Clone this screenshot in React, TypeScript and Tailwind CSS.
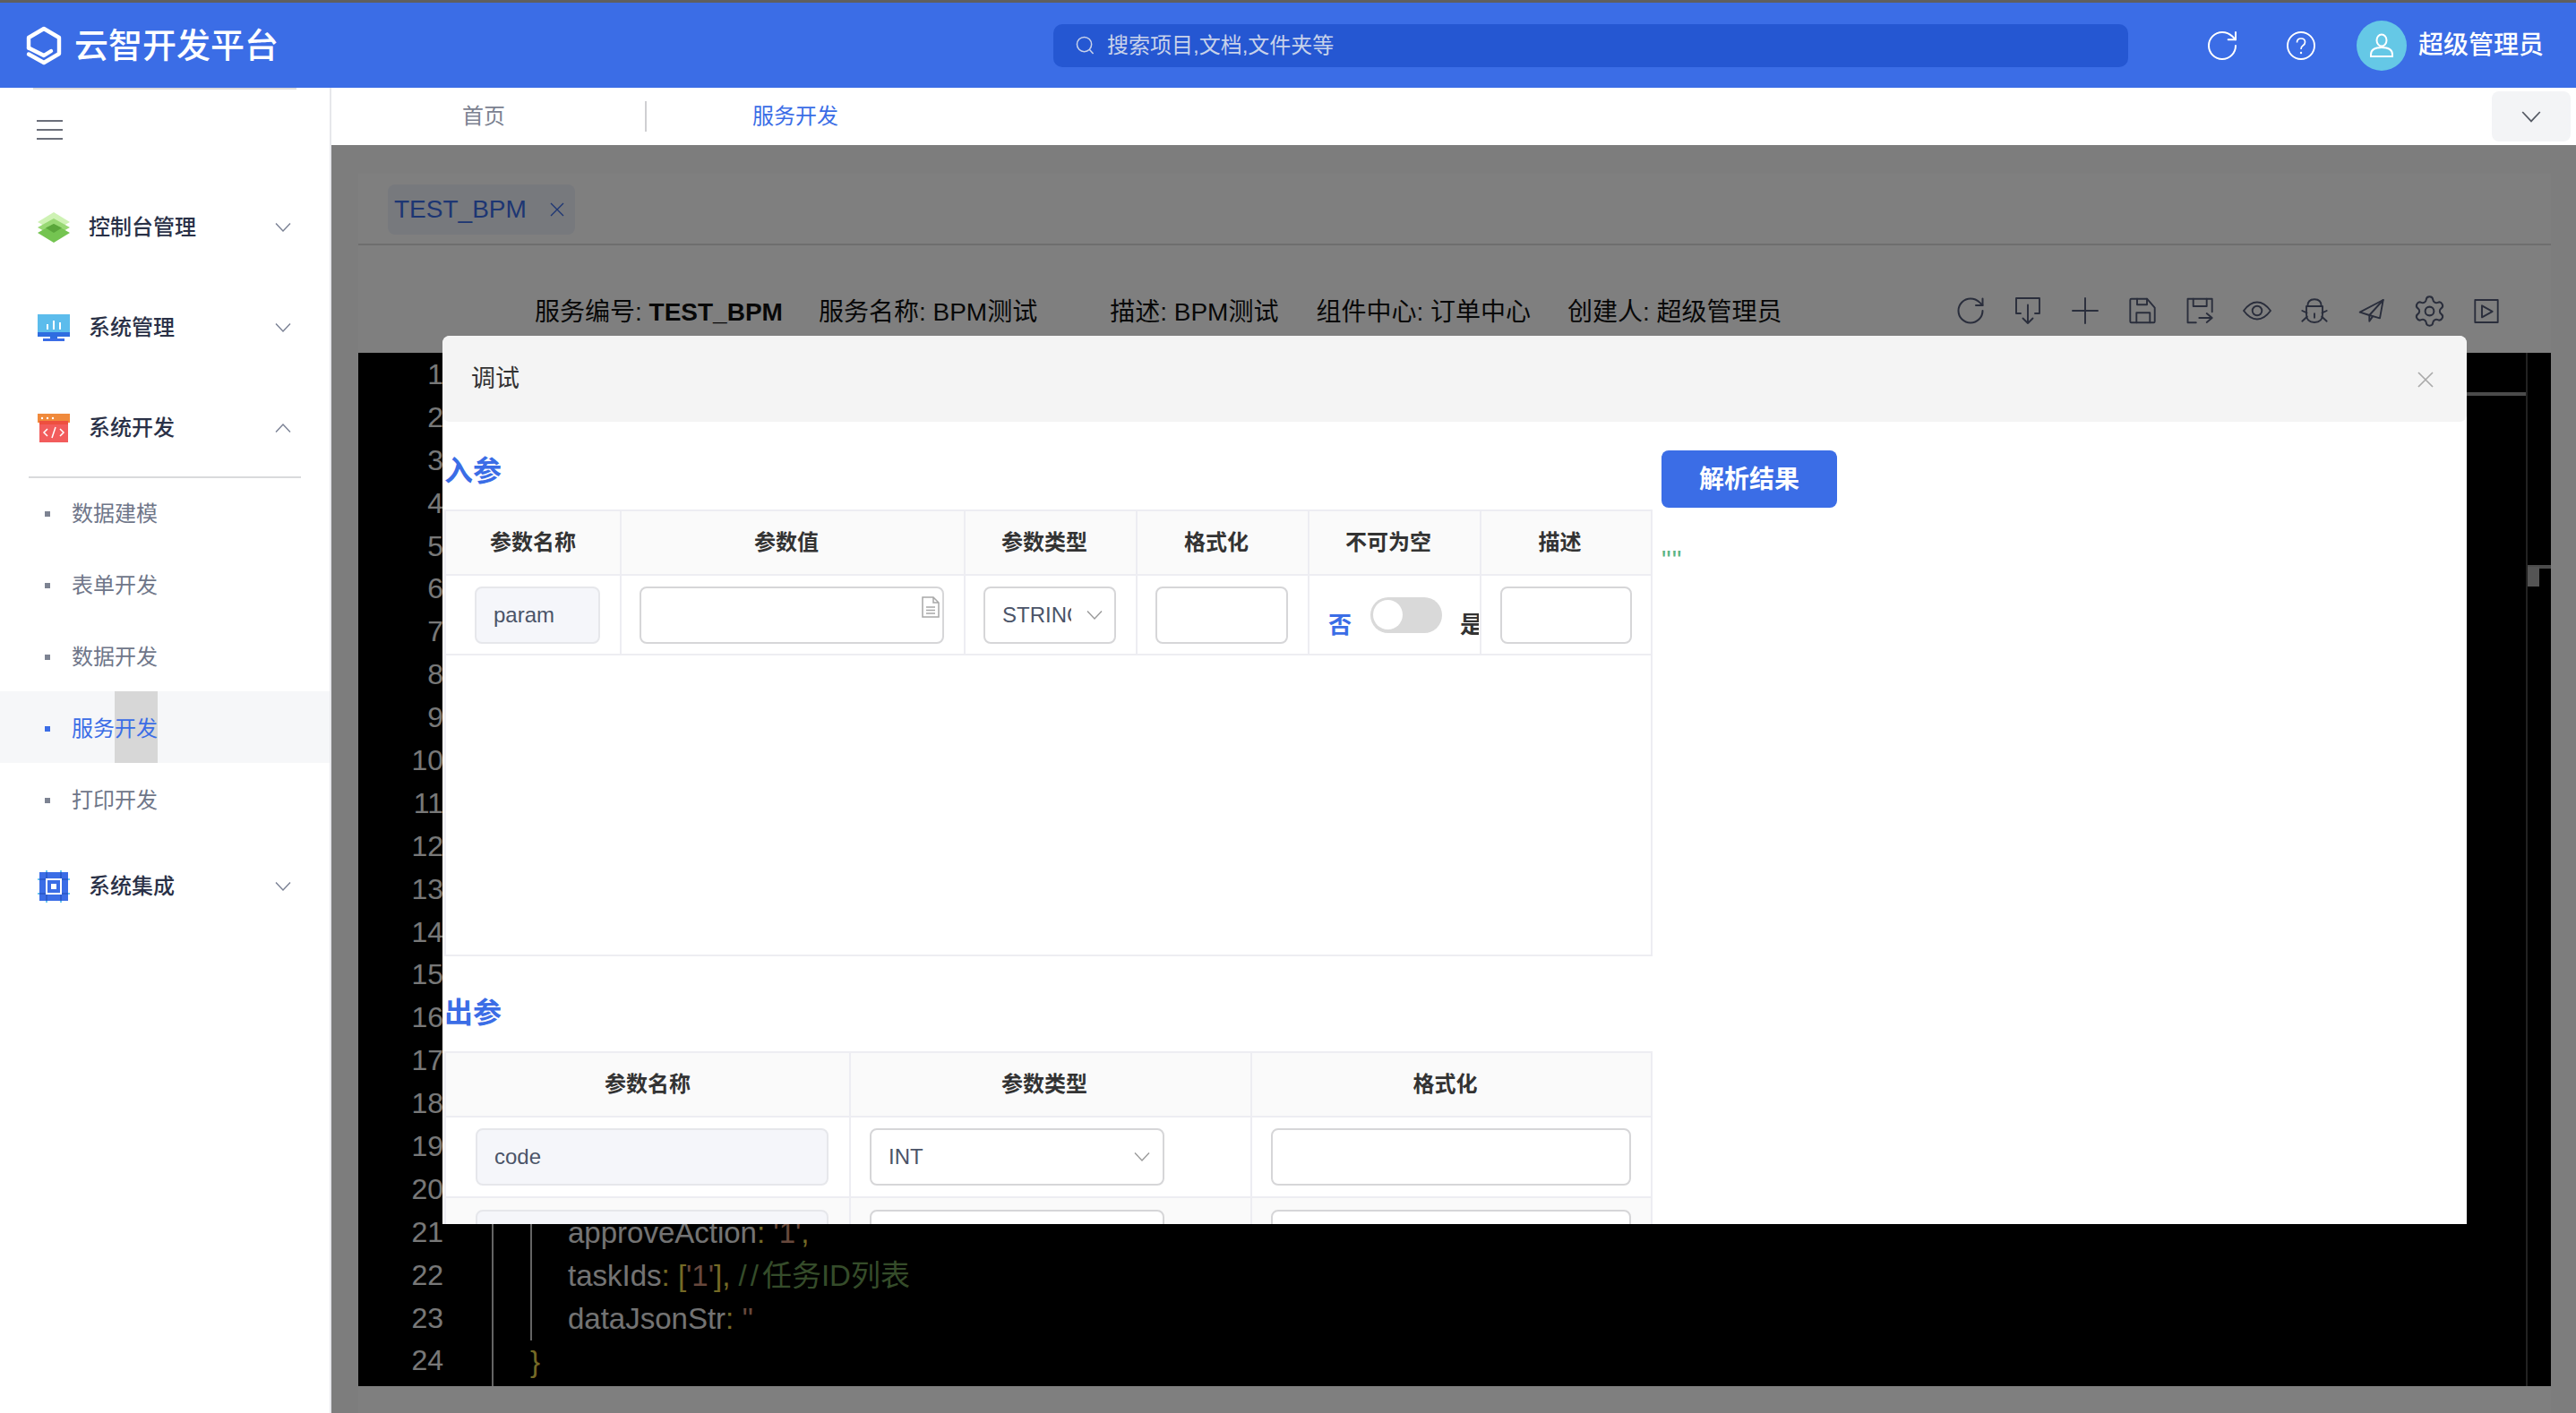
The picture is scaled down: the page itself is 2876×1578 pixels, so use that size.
import React from "react";
import { RotateCw, Settings } from "lucide-react";

const Chevron = ({ up, className = "w-[18px] h-[10px] text-[#7a8194]" }: { up?: boolean; className?: string }) => (
  <svg viewBox="0 0 18 10" className={className} fill="none" stroke="currentColor" strokeWidth="1.4">
    <path d={up ? "M1 9.5 L9 1 L17 9.5" : "M1 .5 L9 9 L17 .5"} />
  </svg>
);

const Logo = () => (
  <svg viewBox="0 0 40 44" className="w-[40px] h-[44px]" fill="none" stroke="#fff" strokeWidth="4.4" strokeLinejoin="round" strokeLinecap="round">
    <path d="M3 24.5 V13 L20 3 L37 13 V31 L20 41 L3 31.5" />
    <path d="M3 24.5 L20 33 L28 28" />
  </svg>
);

const Layers = () => (
  <svg viewBox="0 0 36 34" className="w-[36px] h-[34px]">
    <path d="M18 0 L36 11 L18 21 L0 11Z" fill="#cef2b4" />
    <path d="M18 7 L36 17 L18 27 L0 17Z" fill="#98d874" />
    <path d="M18 13 L36 23 L18 34 L0 23Z" fill="#74c451" />
    <path d="M18 13 L27 17.5 L18 23 L9 17.5Z" fill="#5aa63b" />
  </svg>
);

const Monitor = () => (
  <svg viewBox="0 0 36 30" className="w-[36px] h-[30px]">
    <rect x="0" y="0" width="36" height="20" fill="#5cbcec" />
    <rect x="0" y="20" width="36" height="5" fill="#2f6de0" />
    <rect x="14" y="25" width="8" height="2" fill="#2f6de0" />
    <rect x="6" y="27" width="24" height="3" fill="#3b6de6" />
    <rect x="10" y="11" width="2" height="6" fill="#fff" />
    <rect x="17" y="7" width="2" height="10" fill="#fff" />
    <rect x="24" y="9" width="2" height="8" fill="#fff" />
  </svg>
);

const CodeWin = () => (
  <svg viewBox="0 0 36 32" className="w-[36px] h-[32px]">
    <rect x="0" y="0" width="36" height="10" fill="#f08a3c" />
    <rect x="2" y="8" width="32" height="24" fill="#f25c5c" />
    <rect x="2" y="8" width="32" height="4" fill="#ee4f3f" />
    <circle cx="5" cy="5" r="1.2" fill="#fff" />
    <circle cx="11" cy="5" r="1.2" fill="#fff" />
    <circle cx="17" cy="5" r="1.2" fill="#fff" />
    <path d="M11 17 L7 21 L11 25 M25 17 L29 21 L25 25 M20 15 L16 27" fill="none" stroke="#fff" strokeWidth="1.5" />
  </svg>
);

const Chip = () => (
  <svg viewBox="0 0 36 36" className="w-[36px] h-[36px]">
    <rect x="2" y="2" width="32" height="32" fill="#3b6de6" />
    <path d="M0 10 H2 M0 26 H2 M34 10 H36 M34 26 H36 M10 0 V2 M26 0 V2 M10 34 V36 M26 34 V36" stroke="#38b6ee" strokeWidth="1.5" />
    <path d="M2 10 H9 M2 26 H9 M27 10 H34 M27 26 H34 M10 2 V9 M26 2 V9 M10 27 V34 M26 27 V34" stroke="#2856c4" strokeWidth="1.5" />
    <rect x="9" y="9" width="18" height="18" fill="#fff" />
    <rect x="11" y="11" width="14" height="14" fill="#3b6de6" />
    <rect x="15" y="15" width="6" height="6" fill="#fff" />
  </svg>
);

const ToolSvg = ({ children }: { children: React.ReactNode }) => (
  <svg viewBox="0 0 32 32" className="w-[32px] h-[32px]" fill="none" stroke="#545c78" strokeWidth="1.9" strokeLinejoin="round" strokeLinecap="round">
    {children}
  </svg>
);

const tools = [
  <RotateCw key="r" className="w-[36px] h-[36px] text-[#545c78]" strokeWidth={1.35} />,
  <ToolSvg key="i">
    <path d="M8 19 H3 V2 H29 V19 H24" />
    <path d="M16 9.5 V30 M10.5 24.5 L16 30 L21.5 24.5" />
  </ToolSvg>,
  <ToolSvg key="p">
    <path d="M2 16 H30 M16 2 V30" />
  </ToolSvg>,
  <ToolSvg key="s">
    <path d="M2.3 4 Q2.3 2.7 3.6 2.7 H21 L29.7 12.7 V28 Q29.7 29.3 28.4 29.3 H3.6 Q2.3 29.3 2.3 28 Z" />
    <path d="M10 2.7 V9.3 H21 V2.7 M9.3 29.3 V18.3 H24.3 V29.3" />
  </ToolSvg>,
  <ToolSvg key="sa">
    <path d="M29.7 17.3 V2.7 H2.5 V29.3 H11.8" />
    <path d="M8.7 2.7 V11 H23.7 V2.7" />
    <path d="M15.3 24 H29.7 M23.7 19 L29.7 24 L23.7 29" />
  </ToolSvg>,
  <ToolSvg key="e">
    <path d="M1 16 Q8 6.5 16 6.5 Q24 6.5 31 16 Q24 25.5 16 25.5 Q8 25.5 1 16 Z" />
    <circle cx="16" cy="16" r="5.3" />
  </ToolSvg>,
  <ToolSvg key="b">
    <path d="M8.3 11 Q8.3 3.3 16 3.3 Q23.7 3.3 23.7 11" />
    <path d="M7 11 H25 V20 Q25 29 16 29 Q7 29 7 20 Z" />
    <path d="M16 19.3 V23.7 M2.3 16 L7.5 18.3 M29.7 16 L24.5 18.3 M2.3 27.7 L7.7 22.7 M29.7 27.7 L24.3 22.7" />
  </ToolSvg>,
  <ToolSvg key="pl">
    <path d="M28.7 4 L2.7 17.7 L13.3 21 V27.7 L17 22.4" />
    <path d="M13.3 21 L25 24.3 L28.7 4 L13.3 21" />
  </ToolSvg>,
  <Settings key="g" className="w-[39px] h-[39px] text-[#545c78]" strokeWidth={1.25} />,
  <ToolSvg key="pv">
    <rect x="3.3" y="4" width="25.4" height="25" />
    <path d="M11 10.3 L22.7 16.8 L11 23.3 Z" />
  </ToolSvg>,
];

const lineText = "h-[47.9px]";
const nums = Array.from({ length: 24 }, (_, i) => i + 1);

const Th = ({ children, shift }: { children: React.ReactNode; shift?: boolean }) => (
  <div className={`h-[72px] bg-[#fafafa] border-b-2 border-[#ededf2] flex items-center justify-center text-[24px] font-semibold text-[#333] ${shift ? "pr-[14px]" : ""}`}>
    {children}
  </div>
);

const Tdb = "border-r-2 border-[#ededf2]";

const Disabled = ({ text, w }: { text?: string; w: string }) => (
  <div className={`${w} h-[64px] shrink-0 rounded-[8px] border-2 border-[#e6e7eb] bg-[#f5f6fa] pl-[19px] flex items-center text-[24px] text-[#4b5468]`}>
    {text}
  </div>
);

const Input = ({ w, children }: { w: string; children?: React.ReactNode }) => (
  <div className={`${w} h-[64px] shrink-0 rounded-[8px] border-2 border-[#d6d6d8] bg-white`}>{children}</div>
);

const Select = ({ w, text, textW, gap }: { w: string; text?: string; textW: string; gap: string }) => (
  <div className={`${w} h-[64px] shrink-0 rounded-[8px] border-2 border-[#d6d6d8] bg-white pl-[19px] flex items-center text-[24px] text-[#4b5468]`}>
    <span className={`${textW} overflow-hidden whitespace-nowrap`}>{text}</span>
    <span className={gap}>
      <Chevron className="w-[18px] h-[10px] text-[#9a9a9a] block" />
    </span>
  </div>
);

const Menu = ({ icon, label, up, h = "h-[112px]", pt = "" }: { icon: React.ReactNode; label: string; up?: boolean; h?: string; pt?: string }) => (
  <div className={`${h} ${pt} flex items-center pl-[42px] pr-[43px] text-[24px] text-[#2a3147]`}>
    <span className="w-[36px] flex justify-center">{icon}</span>
    <span className="ml-[21px] font-medium">{label}</span>
    <span className="ml-auto">
      <Chevron up={up} />
    </span>
  </div>
);

const Sub = ({ label }: { label: string }) => (
  <div className="h-[80px] pt-[3px] flex items-center pl-[50px] text-[24px] text-[#6f7689]">
    <span className="w-[6px] h-[6px] bg-[#7d8392]" />
    <span className="ml-[24px]">{label}</span>
  </div>
);

export default function App() {
  return (
    <div className="w-[2876px] h-[1578px] overflow-hidden bg-white flex flex-col [font-family:'Liberation_Sans','Noto_Sans_CJK_SC',sans-serif]">
      {/* top bar */}
      <header className="h-[98px] shrink-0 border-t-[3px] border-[#5f5f5f] bg-[#3b6de6] flex items-center text-white">
        <div className="w-[1176px] shrink-0 pl-[29px] flex items-center">
          <Logo />
          <span className="ml-[14px] text-[38px] font-medium leading-none">云智开发平台</span>
        </div>
        <div className="w-[1200px] h-[48px] shrink-0 rounded-[10px] bg-[#2557d2] flex items-center pl-[25px] text-[24px] text-[#c8d2ea]">
          <svg viewBox="0 0 22 22" className="w-[21px] h-[21px]" fill="none" stroke="currentColor" strokeWidth="1.6">
            <circle cx="10" cy="10" r="8.5" />
            <path d="M16 16 L20.5 21" />
          </svg>
          <span className="ml-[14px]">搜索项目,文档,文件夹等</span>
        </div>
        <RotateCw className="ml-[85px] w-[40px] h-[40px] text-white" strokeWidth={1.2} />
        <svg viewBox="0 0 32 32" className="ml-[52px] w-[32px] h-[32px]" fill="none" stroke="#fff" strokeWidth="1.9">
          <circle cx="16" cy="16" r="15" />
          <path d="M11.5 12.5 Q11.5 8 16 8 Q20.5 8 20.5 12 Q20.5 14.5 18 16 Q16 17.3 16 20" strokeWidth="1.7" />
          <circle cx="16" cy="24" r="1.2" fill="#fff" stroke="none" />
        </svg>
        <div className="ml-[46px] w-[56px] h-[56px] rounded-full bg-[#65c8e6] flex items-center justify-center">
          <svg viewBox="0 0 28 28" className="w-[28px] h-[28px]" fill="none" stroke="#fff" strokeWidth="2">
            <ellipse cx="14" cy="8" rx="5.5" ry="6.5" />
            <path d="M2 26 V24 Q2 16 14 16 Q26 16 26 24 V26 Z" />
          </svg>
        </div>
        <span className="ml-[13px] text-[28px] font-medium">超级管理员</span>
      </header>

      <div className="flex-1 flex min-h-0">
        {/* sidebar */}
        <aside className="w-[370px] shrink-0 border-r-2 border-[#e6e7eb] bg-white flex flex-col">
          <div className="mx-[37px] h-[2px] bg-[#dcdcdc]" />
          <div className="h-[98px] pl-[41px] pt-[34px]">
            <div className="w-[29px] h-[22px] flex flex-col justify-between">
              <span className="h-[2px] bg-[#6b6f7a]" />
              <span className="h-[2px] bg-[#6b6f7a]" />
              <span className="h-[2px] bg-[#6b6f7a]" />
            </div>
          </div>
          <Menu icon={<Layers />} label="控制台管理" />
          <Menu icon={<Monitor />} label="系统管理" />
          <Menu icon={<CodeWin />} label="系统开发" up h="h-[110px]" pt="pt-[1px]" />
          <div className="mx-[32px] h-0 relative">
            <div className="absolute inset-x-0 top-0 h-[2px] bg-[#d9dadc]" />
          </div>
          <Sub label="数据建模" />
          <Sub label="表单开发" />
          <Sub label="数据开发" />
          <div className="h-[80px] flex items-stretch pl-[50px] text-[24px] text-[#3b6de6] bg-[#f6f7f9]">
            <span className="self-center w-[6px] h-[6px] bg-[#3b6de6] mt-[3px]" />
            <span className="self-center ml-[24px] pt-[3px]">服务</span>
            <span className="flex items-center bg-[#d7d7d7] pt-[3px]">开发</span>
          </div>
          <Sub label="打印开发" />
          <div className="pt-[2px]">
            <Menu icon={<Chip />} label="系统集成" />
          </div>
        </aside>

        {/* main */}
        <main className="flex-1 min-w-0 flex flex-col">
          <div className="h-[64px] shrink-0 flex items-center pl-[146px] pr-[6px] text-[24px] bg-white">
            <span className="text-[#7b8190]">首页</span>
            <span className="ml-[156px] w-[2px] h-[34px] bg-[#cfcfd2]" />
            <span className="ml-[118px] text-[#3b6de6]">服务开发</span>
            <div className="ml-auto w-[88px] h-[56px] rounded-[8px] bg-[#f3f4f6] flex items-center justify-center">
              <Chevron className="w-[22px] h-[13px] text-[#555a64]" />
            </div>
          </div>

          <div className="relative flex-1 min-h-0 bg-[#fafafa] pt-[32px] pl-[30px] pr-[28px]">
            <section className="h-full bg-white flex flex-col pb-[30px]">
              <div className="h-[80px] shrink-0 border-b-2 border-[#dcdcdc] pl-[33px] pt-[12px]">
                <div className="w-[209px] h-[56px] rounded-[8px] bg-[#eef2fb] flex items-center pl-[7px] text-[28px] text-[#3b6de6]">
                  TEST_BPM
                  <svg viewBox="0 0 16 16" className="ml-[26px] w-[16px] h-[16px]" fill="none" stroke="currentColor" strokeWidth="1.4">
                    <path d="M1 1 L15 15 M15 1 L1 15" />
                  </svg>
                </div>
              </div>
              <div className="h-[120px] shrink-0 pt-[30px] pl-[197px] pr-[40px] flex items-center text-[28px] text-[#111]">
                <span>
                  服务编号: <b className="font-semibold">TEST_BPM</b>
                </span>
                <span className="ml-[40px]">服务名称: BPM测试</span>
                <span className="ml-[81px]">描述: BPM测试</span>
                <span className="ml-[42px]">组件中心: 订单中心</span>
                <span className="ml-[41px]">创建人: 超级管理员</span>
                <div className="ml-auto flex items-center -mt-[4px]">
                  {tools.map((t, i) => (
                    <span key={i} className="w-[64px] flex justify-center">
                      {t}
                    </span>
                  ))}
                </div>
              </div>

              {/* editor */}
              <div className="flex-1 min-h-0 bg-black flex text-[32px] leading-[47.9px] overflow-hidden">
                <div className="w-[95px] shrink-0 pt-[1px] text-right text-[#f0f0f0]">
                  {nums.map((n) => (
                    <div key={n} className={lineText}>
                      {n}
                    </div>
                  ))}
                </div>
                <div className="relative flex-1 ml-[54px] border-l-2 border-[#c8c8c8] pt-[1px] pl-[41px] text-[#e6e6e6] text-[33px]">
                  <div className="absolute right-0 top-[44px] w-[66px] h-[4px] bg-[#969696]" />
                  <div className={`${lineText} mt-[958px] border-l-2 border-[#c8c8c8] pl-[40px]`}>
                    approveAction<span className="text-[#e8d44d]">:</span> <span className="text-[#ce9178]">'1'</span>
                    <span className="text-[#e8d44d]">,</span>
                  </div>
                  <div className={`${lineText} border-l-2 border-[#c8c8c8] pl-[40px] whitespace-nowrap`}>
                    taskIds<span className="text-[#e8d44d]">:</span> <span className="text-[#e8d44d]">[</span>
                    <span className="text-[#ce9178]">'1'</span>
                    <span className="text-[#e8d44d]">],</span>{" "}
                    <span className="text-[#6a9955]">
                      <span className="tracking-[4px]">//</span>任务ID列表
                    </span>
                  </div>
                  <div className={`${lineText} border-l-2 border-[#c8c8c8] pl-[40px]`}>
                    dataJsonStr<span className="text-[#e8d44d]">:</span> <span className="text-[#ce9178]">''</span>
                  </div>
                  <div className={`${lineText} text-[#e8d44d]`}>{"}"}</div>
                </div>
                <div className="relative w-[28px] shrink-0 border-l-2 border-[#444]">
                  <div className="absolute inset-x-0 top-[237px] h-[4px] bg-[#969696]" />
                  <div className="absolute left-0 top-[239px] w-[13px] h-[22px] bg-[#a8a8a8]" />
                </div>
              </div>
            </section>

            {/* dim layer + dialog */}
            <div className="absolute inset-0 bg-black/50">
              <div className="absolute left-[124px] top-[213px] w-[2260px] h-[992px] bg-white rounded-t-[8px] flex flex-col overflow-hidden">
                <div className="h-[96px] shrink-0 bg-[#f4f4f4] rounded-[8px] flex items-center pl-[32px] pr-[37px] text-[27px] text-[#333]">
                  调试
                  <svg viewBox="0 0 18 18" className="ml-auto mt-[2px] w-[18px] h-[18px]" fill="none" stroke="#a9a9a9" strokeWidth="1.7">
                    <path d="M1 1 L17 17 M17 1 L1 17" />
                  </svg>
                </div>
                <div className="flex-1 min-h-0 flex overflow-hidden pl-[2px]">
                  <div className="w-[1349px] shrink-0">
                    <div className="h-[98px] pt-[12px] flex items-center text-[32px] font-semibold text-[#3b6de6]">入参</div>
                    <div className="h-[499px] border-2 border-[#ededf2]">
                      <div className="grid grid-cols-[196px_384px_192px_192px_192px_189px]">
                        <div className={Tdb}><Th>参数名称</Th></div>
                        <div className={Tdb}><Th shift>参数值</Th></div>
                        <div className={Tdb}><Th shift>参数类型</Th></div>
                        <div className={Tdb}><Th shift>格式化</Th></div>
                        <div className={Tdb}><Th shift>不可为空</Th></div>
                        <div><Th shift>描述</Th></div>
                      </div>
                      <div className="h-[89px] grid grid-cols-[196px_384px_192px_192px_192px_189px] border-b-2 border-[#ededf2]">
                        <div className={`${Tdb} pl-[32px] flex items-center`}>
                          <Disabled text="param" w="w-[140px]" />
                        </div>
                        <div className={`${Tdb} pl-[20px] flex items-center`}>
                          <Input w="w-[340px]">
                            <div className="flex justify-end pt-[9px] pr-[3px]">
                              <svg viewBox="0 0 20 24" className="w-[20px] h-[24px]" fill="none" stroke="#a8a8a8" strokeWidth="1.5">
                                <path d="M1 1 H13 L19 7 V23 H1 Z M13 1 V7 H19 M5 12 H15 M5 15.5 H15 M5 19 H15" />
                              </svg>
                            </div>
                          </Input>
                        </div>
                        <div className={`${Tdb} pl-[20px] flex items-center`}>
                          <Select w="w-[148px]" text="STRING" textW="w-[77px]" gap="ml-[17px]" />
                        </div>
                        <div className={`${Tdb} pl-[20px] flex items-center`}>
                          <Input w="w-[148px]" />
                        </div>
                        <div className={`${Tdb} pl-[21px] flex items-center overflow-hidden font-semibold text-[26px]`}>
                          <span className="mt-[24px] text-[#3b6de6] w-[26px] shrink-0">否</span>
                          <div className="ml-[21px] w-[80px] h-[40px] shrink-0 rounded-full bg-[#d9d9d9] pl-[3px] flex items-center">
                            <span className="w-[33px] h-[33px] rounded-full bg-white" />
                          </div>
                          <span className="ml-[20px] mt-[24px] text-[#333] w-[21px] shrink-0 overflow-hidden whitespace-nowrap">是</span>
                        </div>
                        <div className="pl-[21px] flex items-center">
                          <Input w="w-[147px]" />
                        </div>
                      </div>
                    </div>

                    <div className="h-[106px] pt-[20px] flex items-center text-[32px] font-semibold text-[#3b6de6]">出参</div>
                    <div className="border-x-2 border-t-2 border-[#ededf2]">
                      <div className="grid grid-cols-[452px_448px_445px]">
                        <div className={Tdb}><Th>参数名称</Th></div>
                        <div className={Tdb}><Th shift>参数类型</Th></div>
                        <div><Th shift>格式化</Th></div>
                      </div>
                      <div className="h-[90px] grid grid-cols-[452px_448px_445px] border-b-2 border-[#ededf2]">
                        <div className={`${Tdb} pl-[33px] flex items-center`}>
                          <Disabled text="code" w="w-[394px]" />
                        </div>
                        <div className={`${Tdb} pl-[21px] flex items-center`}>
                          <Select w="w-[329px]" text="INT" textW="w-[274px]" gap="" />
                        </div>
                        <div className="pl-[21px] flex items-center">
                          <Input w="w-[402px]" />
                        </div>
                      </div>
                      <div className="h-[90px] grid grid-cols-[452px_448px_445px] bg-[#fafafa]">
                        <div className={`${Tdb} pl-[33px] flex items-center`}>
                          <Disabled w="w-[394px]" />
                        </div>
                        <div className={`${Tdb} pl-[21px] flex items-center`}>
                          <Input w="w-[329px]" />
                        </div>
                        <div className="pl-[21px] flex items-center">
                          <Input w="w-[402px]" />
                        </div>
                      </div>
                    </div>
                  </div>
                  <div className="ml-[10px] pt-[32px]">
                    <div className="w-[196px] h-[64px] pt-[2px] rounded-[8px] bg-[#3b6de6] flex items-center justify-center text-[28px] font-semibold text-white">
                      解析结果
                    </div>
                    <div className="mt-[42px] text-[30px] tracking-[1px] leading-[32px] text-[#5cb585]">""</div>
                  </div>
                </div>
              </div>
            </div>
          </div>
        </main>
      </div>
    </div>
  );
}
